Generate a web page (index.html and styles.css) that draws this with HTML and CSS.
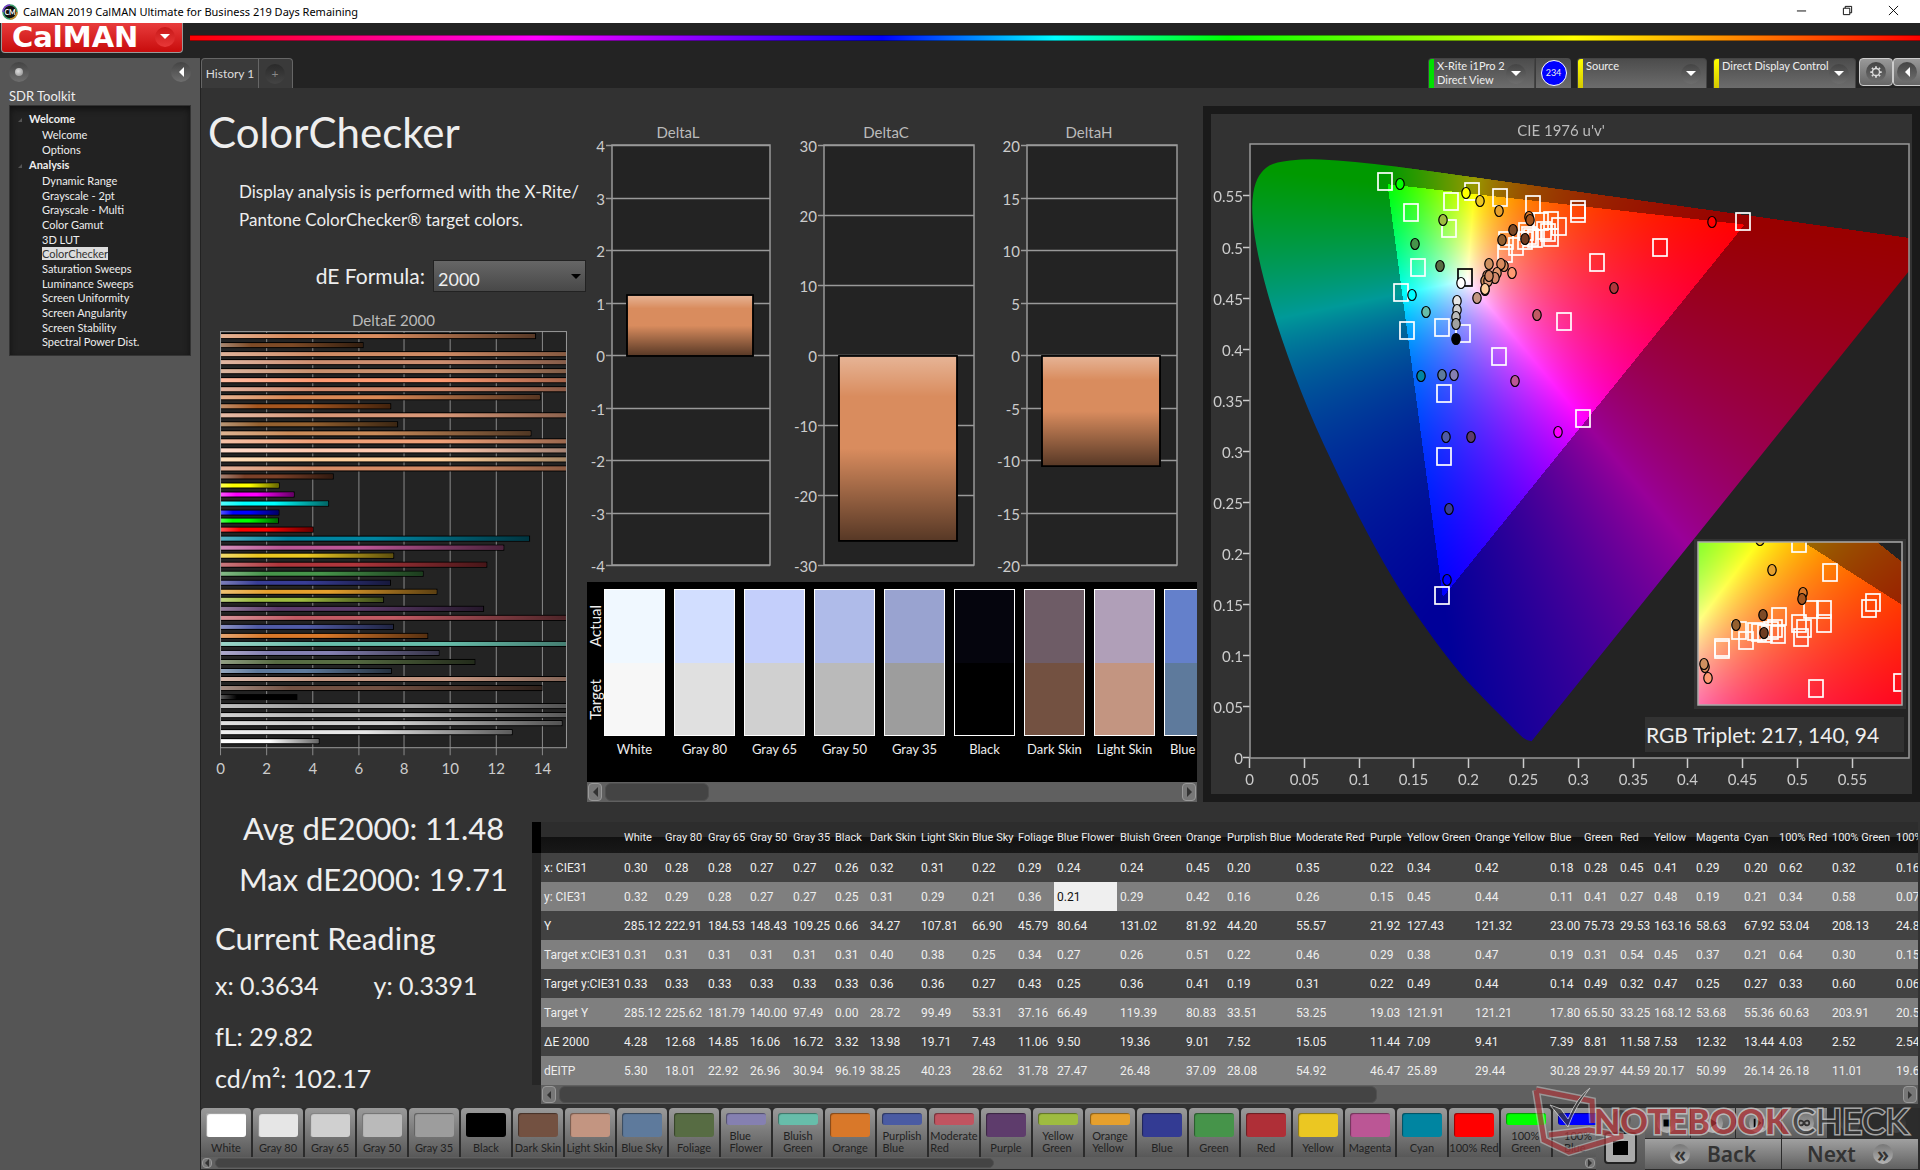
FILE: index.html
```html
<!DOCTYPE html>
<html lang="en">
<head>
    <meta charset="utf-8">
    <title>CalMAN 2019 CalMAN Ultimate for Business</title>
    <link rel="stylesheet" href="styles.css">
</head>
<body>
    <div class="titlebar">
        <svg class="app-icon" viewBox="0 0 16 16"><circle cx="8" cy="8" r="7" fill="#111" stroke="#3a9a6a" stroke-width="1.5"/><path d="M1 8a7 7 0 0 1 7-7" fill="none" stroke="#7a3acb" stroke-width="1.5"/><path d="M8 15a7 7 0 0 0 7-7" fill="none" stroke="#c98a2a" stroke-width="1.5"/><text x="8" y="11" text-anchor="middle" font-size="7" font-weight="700" fill="#fff">CM</text></svg>
        <span class="titlebar-text">CalMAN 2019 CalMAN Ultimate for Business 219 Days Remaining</span>
        <div class="window-buttons">
            <button aria-label="Minimize"><svg viewBox="0 0 12 12"><path d="M1 6.5h10"/></svg></button>
            <button aria-label="Restore"><svg viewBox="0 0 12 12"><path d="M1.500 3.500h7v7h-7zM3.500 3.500v-2h7v7h-2"/></svg></button>
            <button aria-label="Close"><svg viewBox="0 0 12 12"><path d="M1 1l10 10M11 1L1 11"/></svg></button>
        </div>
    </div>

    <header class="header">
        <button class="logo">CalMAN<span class="round red"><i class="arrow down"></i></span></button>
        <div class="rainbow"></div>
    </header>

    <div class="layout">
        <aside class="sidebar">
            <div class="sidebar-top">
                <button class="round" aria-label="Pin"><i class="dot"></i></button>
                <button class="round" aria-label="Collapse"><i class="arrow left"></i></button>
            </div>
            <div class="sidebar-title">SDR Toolkit</div>
            <nav class="tree">
                <div class="tree-group">Welcome</div>
                <ul>
                    <li><a href="#">Welcome</a></li>
                    <li><a href="#">Options</a></li>
                </ul>
                <div class="tree-group">Analysis</div>
                <ul class="analysis">
                    <li><a href="#">Dynamic Range</a></li>
                    <li><a href="#">Grayscale - 2pt</a></li>
                    <li><a href="#">Grayscale - Multi</a></li>
                    <li><a href="#">Color Gamut</a></li>
                    <li><a href="#">3D LUT</a></li>
                    <li><a href="#" class="active">ColorChecker</a></li>
                    <li><a href="#">Saturation Sweeps</a></li>
                    <li><a href="#">Luminance Sweeps</a></li>
                    <li><a href="#">Screen Uniformity</a></li>
                    <li><a href="#">Screen Angularity</a></li>
                    <li><a href="#">Screen Stability</a></li>
                    <li><a href="#">Spectral Power Dist.</a></li>
                </ul>
            </nav>
        </aside>

        <main class="main">
            <div class="tabs">
                <button class="tab">History 1</button>
                <button class="tab tab-add" aria-label="Add tab"><span class="round dark">+</span></button>
                <div class="devices">
                    <button class="device meter"><i class="led green"></i><span class="device-name">X-Rite i1Pro 2<br>Direct View</span><span class="round"><i class="arrow down"></i></span></button>
                    <button class="meter-count"><span>234</span></button>
                    <button class="device source"><i class="led yellow"></i><span class="device-name">Source</span><span class="round"><i class="arrow down"></i></span></button>
                    <button class="device display"><i class="led yellow"></i><span class="device-name">Direct Display Control</span><span class="round"><i class="arrow down"></i></span></button>
                    <button class="tool" aria-label="Settings"><span class="round"><svg viewBox="0 0 16 16"><circle cx="8" cy="8" r="4" fill="none" stroke="#ddd" stroke-width="1.5"/><path d="M8 1.500v2M8 12.500v2M1.500 8h2M12.500 8h2M3.400 3.400l1.400 1.400M11.200 11.200l1.400 1.400M3.400 12.600l1.400-1.400M11.200 4.800l1.400-1.400" stroke="#ddd" stroke-width="2"/></svg></span></button>
                    <button class="tool" aria-label="Hide"><span class="round"><i class="arrow left"></i></span></button>
                </div>
            </div>

            <div class="workspace">
                <section class="summary">
                    <h1>ColorChecker</h1>
                    <p>Display analysis is performed with the X-Rite/<br>Pantone ColorChecker® target colors.</p>
                    <div class="formula">
                        <label for="formula">dE Formula:</label>
                        <select id="formula"><option>2000</option><option>1976</option></select>
                        <i class="arrow down"></i>
                    </div>
                    <svg id="deltaE" class="chart" viewBox="0 0 360 472"></svg>
                </section>

                <section class="center">
                    <svg id="deltas" class="chart" viewBox="0 0 594 456"></svg>
                    <div class="compare">
                        <div class="compare-body">
                            <div class="compare-side"><span>Actual</span><span>Target</span></div>
                            <div id="patches" class="patches"></div>
                        </div>
                        <div class="scroll"><button aria-label="Left"><i class="arrow left"></i></button><div class="track"><div class="thumb short"></div></div><button aria-label="Right"><i class="arrow right"></i></button></div>
                    </div>
                </section>

                <section class="cie">
                    <div class="cie-stack">
                        <canvas id="gamut" width="701" height="680"></canvas>
                        <svg id="cie" viewBox="0 0 701 680"></svg>
                    </div>
                </section>
            </div>

            <div class="lower">
                <section class="readings">
                    <div class="big">Avg dE2000: 11.48</div>
                    <div class="big">Max dE2000: 19.71</div>
                    <h2>Current Reading</h2>
                    <div class="pair"><span>x: 0.3634</span><span>y: 0.3391</span></div>
                    <div class="reading">fL: 29.82</div>
                    <div class="reading last">cd/m²: 102.17</div>
                </section>
                <section class="grid-wrap">
                    <div class="grid-view"><table id="grid"></table></div>
                    <div class="scroll grid-scroll"><button aria-label="Left"><i class="arrow left"></i></button><div class="track"><div class="thumb long"></div></div><button aria-label="Right"><i class="arrow right"></i></button></div>
                </section>
            </div>

            <footer class="footer">
                <div class="strip">
                    <div id="buttons" class="buttons"></div>
                    <div class="scroll strip-scroll"><button aria-label="Left"><i class="arrow left"></i></button><div class="track"><div class="thumb half"></div></div><button aria-label="Right"><i class="arrow right"></i></button></div>
                </div>
                <div class="stop-area">
                    <button class="up" aria-label="Up"><span class="round"><i class="arrow up"></i></span></button>
                    <button class="pattern" aria-label="Pattern"><i></i></button>
                </div>
                <div class="controls">
                    <div class="transport">
                        <button aria-label="Stop"><span class="round light"><svg viewBox="0 0 16 16"><path d="M4 4h8v8H4z"/></svg></span></button>
                        <button aria-label="Read"><span class="round light"><svg viewBox="0 0 16 16"><path d="M5 3l8 5-8 5z"/></svg></span></button>
                        <button aria-label="Read series"><span class="round light"><svg viewBox="0 0 16 16"><path d="M2 3h2v10H2zM12 3h2v10h-2zM6 4l5 4-5 4z"/></svg></span></button>
                        <button aria-label="Continuous"><span class="round light"><svg viewBox="0 0 16 16"><path d="M8 8C6 4 2 5 2 8s4 4 6 0 6-3 6 0-4 4-6 0z" fill="none" stroke="#333" stroke-width="2"/></svg></span></button>
                        <button class="off" aria-label="Refresh"><span class="round dark"></span></button>
                        <button class="off" aria-label="Record"><span class="round dark"></span></button>
                    </div>
                    <div class="paging">
                        <button><span class="round light">«</span>Back</button>
                        <button>Next<span class="round light">»</span></button>
                    </div>
                </div>
            </footer>
        </main>
    </div>

    <svg class="watermark" viewBox="0 0 384 74">
        <g fill="none" stroke-linejoin="miter">
            <path d="M4 5L60 16L61 38M4 5L12 55L37 67L91 51L57 45L17 50" stroke="#ddd" stroke-width="8" opacity=".6"/>
            <path d="M4 5L60 16L61 38M4 5L12 55L37 67L91 51L57 45L17 50" stroke="#a63c40" stroke-width="5"/>
        </g>
        <path d="M18 20l11 4 7 10Q45 12 58 3Q44 20 36 42z" fill="#3a3a3a" stroke="#ddd"/>
        <text x="62" y="49" class="wm-note">NOTEBOOK</text>
        <text x="260" y="49" class="wm-check">CHECK</text>
    </svg>

    <script src="app.js"></script>
</body>
</html>
```

FILE: styles.css
```css
* {
    box-sizing: border-box;
}
body {
    margin: 0;
    min-height: 100vh;
    display: flex;
    flex-direction: column;
    background: #232323;
    color: #eee;
    font-family: Lato, "Open Sans", sans-serif;
    font-size: 13px;
    overflow: hidden;
}
button, select {
    font: inherit;
    color: inherit;
    border: 0;
    padding: 0;
    margin: 0;
    background: none;
}
a {
    color: inherit;
    text-decoration: none;
}
h1, h2, p, ul {
    margin: 0;
    padding: 0;
    font-weight: 400;
    list-style: none;
}

/* window chrome */
.titlebar {
    display: flex;
    align-items: center;
    height: 23px;
    background: #fff;
    color: #000;
    font-family: "Noto Sans", sans-serif;
    font-size: 11px;
    padding-left: 2px;
}
.app-icon {
    width: 16px;
    height: 16px;
    margin-right: 5px;
}
.window-buttons {
    margin-left: auto;
    display: flex;
}
.window-buttons button {
    width: 46px;
    height: 20px;
}
.window-buttons button:last-child {
    width: 50px;
    padding-right: 4px;
}
.window-buttons svg {
    width: 11px;
    height: 11px;
    fill: none;
    stroke: #000;
}
.header {
    display: flex;
    align-items: flex-start;
    height: 35px;
    gap: 7px;
    padding-left: 1px;
}
.logo {
    display: flex;
    align-items: center;
    justify-content: space-between;
    width: 182px;
    height: 30px;
    padding: 0 7px 2px 10px;
    border: 1px solid #999;
    border-top: 0;
    border-radius: 0 0 4px 4px;
    background: linear-gradient(#e83c3c, #c80c0c);
    color: #fff;
    font-family: "DejaVu Sans", sans-serif;
    font-size: 29px;
    line-height: 28px;
    font-weight: 700;
}
.rainbow {
    flex: 1;
    height: 6px;
    margin-top: 12px;
    background: linear-gradient(90deg, #f00, #f0f 20%, #00f 40%, #0ff 50%, #0f0 60%, #ff0 80%, #f00);
    border-top: 1px solid rgba(0, 0, 0, .4);
    border-bottom: 1px solid rgba(0, 0, 0, .4);
}
.round {
    display: flex;
    flex: none;
    align-items: center;
    justify-content: center;
    width: 20px;
    height: 20px;
    border-radius: 50%;
    background: linear-gradient(#444, #6e6e6e);
}
.round svg {
    width: 14px;
    height: 14px;
}
.round.red {
    background: linear-gradient(#c81818, #e83838);
}
.round.dark {
    background: linear-gradient(#2a2a2a, #444);
    color: #888;
}
.round.light {
    background: linear-gradient(#777, #b4b4b4);
}
.arrow {
    width: 0;
    height: 0;
    border: 5px solid transparent;
}
.arrow.down {
    border-top-color: #fff;
    border-bottom-width: 0;
}
.arrow.up {
    border-bottom-color: #333;
    border-top-width: 0;
}
.arrow.left {
    border-right-color: #fff;
    border-left-width: 0;
}
.arrow.right {
    border-left-color: #333;
    border-right-width: 0;
}
.dot {
    width: 8px;
    height: 8px;
    border-radius: 50%;
    background: radial-gradient(circle at 40% 40%, #ddd, #888);
}
.layout {
    display: flex;
    flex: 1;
}

/* sidebar */
.sidebar {
    flex: none;
    width: 200px;
    padding: 4px 9px;
    background: #555;
}
.sidebar-top {
    display: flex;
    justify-content: space-between;
}
.sidebar-title {
    font-size: 13px;
    line-height: 22px;
    margin-top: 3px;
    margin-bottom: -2px;
}
.tree {
    height: 251px;
    padding-top: 5px;
    background: #222;
    border: 1px solid #333;
    box-shadow: inset 0 3px 6px #111;
    font-size: 11px;
    line-height: 15px;
}
.tree-group {
    line-height: 16px;
    padding-left: 19px;
    font-weight: 700;
    position: relative;
}
.tree-group::before {
    content: "";
    position: absolute;
    left: 8px;
    top: 7px;
    border: 2px solid;
    border-color: transparent #555 #555 transparent;
}
.tree li {
    padding-left: 32px;
}
.analysis {
    display: flex;
    flex-direction: column;
    height: 176px;
}
.analysis li {
    flex: 1;
    min-height: 0;
}
.tree a.active {
    background: #ddd;
    color: #333;
}

/* tabs */
.main {
    flex: 1;
    min-width: 0;
    display: flex;
    flex-direction: column;
    background: #323232;
    border-left: 1px solid #222;
}
.tabs {
    display: flex;
    align-items: flex-end;
    height: 30px;
    background: #232323;
}
.tab {
    width: 58px;
    height: 30px;
    border: 1px solid #666;
    border-bottom: 0;
    border-radius: 4px 0 0 0;
    background: #3a3a3a;
    color: #ddd;
    font-size: 12px;
    white-space: nowrap;
}
.tab-add {
    width: 34px;
    border-left: 0;
    border-radius: 0 4px 0 0;
    padding-left: 6px;
}
.devices {
    display: flex;
    align-items: flex-end;
    margin-left: auto;
}
.device {
    display: flex;
    align-items: center;
    height: 30px;
    overflow: hidden;
    padding-right: 8px;
    border: 1px solid #444;
    border-bottom: 0;
    border-radius: 4px 4px 0 0;
    background: linear-gradient(#4c4c4c, #6c6c6c);
    font-size: 11px;
    line-height: 14px;
    text-align: left;
    white-space: nowrap;
}
.device.meter {
    width: 107px;
    border-radius: 4px 0 0 0;
}
.device.source {
    width: 130px;
    margin: 0 6px;
    padding-right: 5px;
}
.device.display {
    width: 143px;
    margin-right: 3px;
}
.led {
    align-self: stretch;
    flex: none;
    width: 5px;
    margin-right: 3px;
}
.led.green {
    background: #00e000;
}
.led.yellow {
    background: linear-gradient(#ff0, #d4c800);
}
.device-name {
    flex: 1;
    align-self: flex-start;
}
.meter-count {
    width: 36px;
    height: 30px;
    border-left: 1px solid #3a3a3a;
    border-radius: 0 4px 0 0;
    background: linear-gradient(#4c4c4c, #6c6c6c);
}
.meter-count span {
    display: block;
    width: 26px;
    height: 26px;
    margin: 0 auto;
    border: 1px solid #fff;
    border-radius: 50%;
    background: #00f;
    font-size: 9px;
    line-height: 24px;
}
.tool {
    display: flex;
    align-items: center;
    justify-content: center;
    align-self: flex-start;
    width: 34px;
    height: 28px;
    border: 1px solid #ccc;
    border-radius: 4px;
    background: linear-gradient(#999, #666);
}
.tool:last-child {
    width: 27px;
    border-right: 0;
    border-radius: 4px 0 0 4px;
}

/* charts */
.workspace {
    display: grid;
    grid-template-columns: minmax(0, 386fr) minmax(0, 616fr) minmax(0, 717fr);
    align-items: start;
}
.chart {
    display: block;
    width: 100%;
}
.summary {
    padding: 14px 13px 0 12px;
}
.summary h1 {
    margin-left: -5px;
    font-size: 42px;
    line-height: 60px;
}
.summary p {
    margin: 16px 0 26px 26px;
    font-size: 17px;
    line-height: 28px;
    white-space: nowrap;
}
.formula {
    position: relative;
    display: flex;
    align-items: center;
    justify-content: flex-end;
    gap: 8px;
    margin: 0 -12px 16px 0;
    font-size: 21px;
    line-height: 32px;
}
.formula select {
    appearance: none;
    width: 153px;
    height: 32px;
    padding: 2px 0 0 4px;
    border: 1px solid #222;
    background: linear-gradient(#666, #484848);
    font-size: 18px;
}
.formula .arrow {
    position: absolute;
    right: 5px;
    border-top-color: #000;
    pointer-events: none;
}
.center {
    padding: 32px 6px 0 0;
}
.center .chart {
    width: calc(100% - 16px);
    margin-left: 3px;
}
.compare {
    margin-top: 6px;
    background: #000;
}
.compare-body {
    display: flex;
    height: 200px;
    padding-top: 7px;
    overflow: hidden;
}
.compare-side {
    flex: none;
    display: flex;
    flex-direction: column;
    justify-content: space-around;
    width: 17px;
    height: 147px;
}
.compare-side span {
    writing-mode: vertical-rl;
    transform: rotate(180deg);
    line-height: 17px;
    font-size: 15px;
}
.patches {
    display: flex;
    gap: 9px;
    overflow: hidden;
}
.patch {
    flex: none;
    width: 61px;
    text-align: center;
    white-space: nowrap;
    font-size: 13px;
    line-height: 26px;
}
.patch-color {
    height: 147px;
    border: 1px solid #fff;
}
.patch-color i {
    display: block;
    height: 50%;
}
.scroll {
    display: flex;
    align-items: center;
    gap: 2px;
    height: 20px;
    background: #606060;
    padding: 1px;
}
.scroll button {
    display: flex;
    align-items: center;
    justify-content: center;
    width: 14px;
    height: 100%;
    border: 1px solid #999;
    border-radius: 4px;
    background: #777;
}
.scroll .arrow.left {
    border-right-color: #333;
}
.track {
    flex: 1;
    height: 100%;
    padding: 0 1px;
}
.thumb {
    height: 100%;
    border-radius: 6px;
    border: 1px solid #505050;
    background: #444;
}
.thumb.short {
    width: 104px;
}
.thumb.long {
    width: 61%;
}
.thumb.half {
    width: 57%;
}
.cie {
    margin-top: 18px;
    padding: 8px;
    background: #1a1a1a;
}
.cie-stack {
    display: grid;
    background: #323232;
}
.cie-stack > * {
    grid-area: 1 / 1;
    width: 100%;
    display: block;
}
svg text {
    font-family: Lato, sans-serif;
}
.axis {
    font-size: 15px;
    fill: #ccc;
}
.axis-title {
    font-size: 15px;
    fill: #bbb;
}
.triplet {
    font-size: 21px;
    fill: #eee;
}

/* readings and data grid */
.lower {
    display: flex;
    flex: 1;
    padding-right: 2px;
}
.readings {
    flex: none;
    width: 331px;
    padding: 1px 0 0 14px;
    white-space: nowrap;
}
.readings .big {
    margin-left: 28px;
    font-size: 31px;
    line-height: 51px;
}
.readings .big + .big {
    margin-left: 24px;
}
.readings h2 {
    font-size: 31px;
    line-height: 40px;
    margin: 13px 0 6px;
}
.pair {
    display: flex;
}
.pair span {
    width: 161px;
}
.pair, .reading {
    font-size: 25px;
    line-height: 42px;
}
.reading {
    margin-top: 9px;
}
.reading.last {
    margin-top: 0;
}
.grid-wrap {
    flex: 1;
    min-width: 0;
    padding-top: 20px;
}
.grid-view {
    overflow: hidden;
}
#grid {
    table-layout: fixed;
    width: 1401px;
    border-collapse: collapse;
    font-family: Roboto, sans-serif;
    font-size: 12px;
    line-height: 16px;
    white-space: nowrap;
}
#grid th, #grid td {
    height: 29px;
    padding: 0 0 0 3px;
    font-weight: 400;
    text-align: left;
}
#grid thead th {
    height: 31px;
    font-size: 11px;
    background: linear-gradient(#2d2d2d 50%, #111 50%, #181818);
}
#grid tbody tr {
    background: #424242;
}
#grid tbody tr:nth-child(even) {
    background: #7f7f7f;
}
#grid .mark {
    background: #262626;
}
#grid thead .mark {
    background: #000;
}
#grid td.selected {
    background: #efefef;
    color: #111;
}
.grid-scroll {
    margin-left: 9px;
    height: 19px;
}

/* footer */
.footer {
    display: flex;
    height: 62px;
    background: #2b2b2b;
    padding-right: 2px;
}
.strip {
    flex: 1;
    min-width: 0;
}
.buttons {
    display: flex;
    gap: 2px;
    height: 49px;
    overflow: hidden;
}
.color-button {
    flex: none;
    display: flex;
    flex-direction: column;
    align-items: center;
    justify-content: space-between;
    width: 50px;
    height: 49px;
    padding: 5px 0 3px;
    border-radius: 4px 4px 0 0;
    background: linear-gradient(#9a9a9a, #585858);
    color: #222;
    font-size: 11px;
    line-height: 12px;
    text-align: left;
    white-space: nowrap;
}
.color-button i {
    width: 40px;
    height: 24px;
    border-radius: 3px;
    box-shadow: inset 1px 1px 1px rgba(0, 0, 0, .4);
}
.color-button.two i {
    height: 12px;
}
.strip-scroll {
    height: 12px;
}
.strip-scroll button {
    width: 10px;
}
.strip-scroll .arrow, .grid-scroll .arrow {
    border-width: 4px;
}
.strip-scroll .arrow.left, .grid-scroll .arrow.left {
    border-left-width: 0;
}
.strip-scroll .arrow.right, .grid-scroll .arrow.right {
    border-right-width: 0;
}
.stop-area {
    display: flex;
    flex-direction: column;
    align-items: center;
    width: 49px;
    background: linear-gradient(#777, #555);
}
.up {
    height: 24px;
}
.pattern {
    width: 33px;
    height: 32px;
    border: 2px solid #222;
    border-radius: 4px;
    background: #aaa;
    padding: 7px;
}
.pattern i {
    display: block;
    height: 14px;
    background: #000;
}
.controls {
    flex: none;
    width: 273px;
    display: grid;
    grid-template-rows: 30px 30px;
    gap: 1px;
}
.transport {
    display: grid;
    grid-template-columns: repeat(6, 1fr);
    gap: 1px;
}
.transport button {
    display: flex;
    align-items: center;
    justify-content: center;
    background: linear-gradient(#888, #5c5c5c);
}
.transport .off {
    background: #2c2c2c;
}
.paging {
    display: grid;
    grid-template-columns: 1fr 1fr;
    gap: 1px;
}
.paging button {
    display: flex;
    align-items: center;
    justify-content: center;
    gap: 17px;
    background: linear-gradient(#a0a0a0, #606060);
    color: #333;
    font-family: "Noto Sans", sans-serif;
    font-size: 21px;
    line-height: 28px;
    font-weight: 600;
}
.paging .round {
    line-height: 18px;
}
.watermark {
    position: absolute;
    right: 3px;
    bottom: 11px;
    width: 386px;
    height: 74px;
    opacity: .75;
    pointer-events: none;
}
.wm-note, .wm-check {
    font-size: 34px;
    font-weight: 900;
    paint-order: stroke;
    stroke: #ccc;
    stroke-width: 3px;
    fill: #b03438;
}
.wm-check {
    font-size: 35px;
    font-weight: 400;
    fill: #333;
}
```

FILE: app.js
```js
const NS = 'http://www.w3.org/2000/svg';

function add(parent, tag, attrs, text) {
    const el = document.createElementNS(NS, tag);
    for (const key in attrs) el.setAttribute(key, attrs[key]);
    if (text !== undefined) el.textContent = text;
    parent.appendChild(el);
    return el;
}

function gloss(svg, id, vertical) {
    const g = add(add(svg, 'defs', {}), 'linearGradient', vertical ? { id: id, x2: 0, y2: 1 } : { id: id });
    add(g, 'stop', { offset: 0, 'stop-color': '#fff', 'stop-opacity': .35 });
    add(g, 'stop', { offset: .22, 'stop-color': '#fff', 'stop-opacity': 0 });
    add(g, 'stop', { offset: .5, 'stop-color': '#000', 'stop-opacity': 0 });
    add(g, 'stop', { offset: 1, 'stop-color': '#000', 'stop-opacity': .6 });
}

// DeltaE 2000, one bar per patch, top to bottom
const bars = [
    ['#d98c5e', 13.7], ['#7d4a26', 6.2], ['#ce8a64', 19], ['#cd8e70', 19], ['#c8906e', 19], ['#ff9a72', 19],
    ['#d38a6c', 19], ['#d98855', 13.9], ['#a5561f', 7.4], ['#d99878', 19], ['#94602f', 7.7], ['#cb8c5a', 13.5],
    ['#f0a078', 19], ['#ffc9b0', 19], ['#ffcf9c', 19], ['#d68c66', 19], ['#7a4028', 4.9], ['#ffff00', 2.55],
    ['#ff00ff', 3.2], ['#00ffff', 4.7], ['#0000ff', 2.54], ['#00ff00', 2.52], ['#ff0000', 4.03], ['#0085a1', 13.44],
    ['#bb5695', 12.32], ['#ebc722', 7.53], ['#af363c', 11.58], ['#46944a', 8.81], ['#383d96', 7.39], ['#e6a02d', 9.41],
    ['#9ebc40', 7.09], ['#5e3c6c', 11.44], ['#c15a63', 15.05], ['#505ba6', 7.52], ['#d97829', 9.01], ['#67bdaa', 19.36],
    ['#8580b1', 9.5], ['#576c43', 11.06], ['#5e7a9c', 7.43], ['#c39682', 19.71], ['#735244', 13.98], ['#000000', 3.32],
    ['#a0a0a0', 16.72], ['#bababa', 16.06], ['#d0d0d0', 14.85], ['#e6e6e6', 12.68], ['#ffffff', 4.28]
];

function drawDeltaE() {
    const svg = document.getElementById('deltaE');
    gloss(svg, 'glossH', false);
    const clip = add(svg.querySelector('defs'), 'clipPath', { id: 'clipE' });
    add(clip, 'rect', { x: 7, y: 23, width: 346, height: 416 });
    add(svg, 'text', { x: 180, y: 18, 'text-anchor': 'middle', class: 'axis-title' }, 'DeltaE 2000');
    add(svg, 'rect', { x: 7, y: 23, width: 346, height: 415, fill: '#232323' });
    for (let v = 0; v <= 14; v += 2) {
        const x = Math.round(7 + v * 22.93) + .5;
        add(svg, 'path', { d: `M${x} 23V446`, stroke: '#8a8a8a' });
        add(svg, 'text', { x: x, y: 465, 'text-anchor': 'middle', class: 'axis' }, v);
    }
    const g = add(svg, 'g', { 'clip-path': 'url(#clipE)' });
    bars.forEach((bar, i) => {
        const y = Math.round(26 + i * 8.78);
        add(g, 'rect', { x: 7, y: y - 1, width: bar[1] * 22.93 + 1, height: 6, fill: '#000' });
        add(g, 'rect', { x: 7, y: y, width: bar[1] * 22.93, height: 4, fill: bar[0] });
        add(g, 'rect', { x: 7, y: y, width: bar[1] * 22.93, height: 4, fill: 'url(#glossH)' });
    });
    add(svg, 'rect', { x: 7.5, y: 23.5, width: 345, height: 415, fill: 'none', stroke: '#999' });
}

function drawDelta(svg, title, x, w, max, step, value) {
    add(svg, 'text', { x: x + w / 2 - 13, y: 18, 'text-anchor': 'middle', class: 'axis-title' }, title);
    add(svg, 'rect', { x: x, y: 25, width: w, height: 420, fill: '#232323' });
    for (let v = max; v >= -max; v -= step) {
        const y = Math.round(235 - v / max * 210) + .5;
        add(svg, 'path', { d: `M${x - 6} ${y}H${x + w}`, stroke: '#999', 'stroke-width': 1.5 });
        add(svg, 'text', { x: x - 7, y: y + 6, 'text-anchor': 'end', class: 'axis' }, v);
    }
    add(svg, 'rect', { x: x, y: 25, width: w, height: 420, fill: 'none', stroke: '#999', 'stroke-width': 1.5 });
    const h = Math.abs(value) / max * 210;
    const box = { x: x + 15, y: value > 0 ? 236 - h : 236, width: w - 32, height: h, stroke: '#000', 'stroke-width': 1.5 };
    add(svg, 'rect', { ...box, fill: '#d98c5e' });
    add(svg, 'rect', { ...box, fill: 'url(#glossV)' });
}

function drawDeltas() {
    const svg = document.getElementById('deltas');
    gloss(svg, 'glossV', true);
    drawDelta(svg, 'DeltaL', 22, 158, 4, 1, 1.16);
    drawDelta(svg, 'DeltaC', 234, 150, 30, 10, -26.4);
    drawDelta(svg, 'DeltaH', 437, 150, 20, 5, -10.5);
}

// spectral locus in u'v'
const locus = [
    [.2569, .0165], [.2522, .0169], [.2461, .0226], [.2347, .0350], [.2161, .0549], [.1877, .0871], [.1441, .1510], [.1147, .2044],
    [.0828, .2708], [.0521, .3427], [.0282, .4117], [.0119, .4698], [.0035, .5131], [.0014, .5432],
    [.0046, .5638], [.0123, .5770], [.0231, .5837], [.0501, .5868], [.0792, .5856], [.1127, .5821],
    [.1531, .5766], [.2026, .5694], [.2623, .5604], [.3315, .5501], [.4035, .5393], [.4692, .5296],
    [.5203, .5219], [.6234, .5065]
];

// brightest color for a chromaticity, dimmed outside the RGB triangle
function shade(x, y) {
    const X = x / y, Z = (1 - x - y) / y;
    const lin = [
        3.2406 * X - 1.5372 - .4986 * Z,
        -.9689 * X + 1.8758 + .0415 * Z,
        .0557 * X - .2040 + 1.0570 * Z
    ];
    const dim = Math.min(...lin) < 0 ? .6 : 1;
    const top = Math.max(...lin);
    return lin.map(c => 255 * dim * Math.max(c, 0) / top);
}

function paint(w, h, toXY) {
    const c = document.createElement('canvas');
    c.width = w;
    c.height = h;
    const ctx = c.getContext('2d');
    const img = ctx.createImageData(w, h);
    for (let j = 0; j < h; j++) {
        for (let i = 0; i < w; i++) {
            const [x, y] = toXY(i, j);
            const rgb = x + y > 1 ? [35, 35, 35] : shade(x, y);
            img.data.set([...rgb, 255], (j * w + i) * 4);
        }
    }
    ctx.putImageData(img, 0, 0);
    return c;
}

function drawGamut() {
    const ctx = document.getElementById('gamut').getContext('2d');
    ctx.fillStyle = '#232323';
    ctx.fillRect(39, 30, 659, 614);
    const fill = paint(659, 614, (i, j) => {
        const u = i / 1096, v = (614 - j) / 1021;
        const d = 6 * u - 16 * v + 12;
        return [9 * u / d, Math.max(4 * v / d, .0001)];
    });
    ctx.save();
    ctx.beginPath();
    ctx.rect(39, 30, 659, 614);
    ctx.clip();
    ctx.beginPath();
    const pts = locus.map(p => [39 + p[0] * 1096, 644 - p[1] * 1021]);
    ctx.moveTo(...pts[0]);
    for (let i = 1; i < pts.length - 1; i++) {
        ctx.quadraticCurveTo(...pts[i], (pts[i][0] + pts[i + 1][0]) / 2, (pts[i][1] + pts[i + 1][1]) / 2);
    }
    ctx.lineTo(...pts[pts.length - 1]);
    ctx.closePath();
    ctx.clip();
    ctx.drawImage(fill, 39, 30);
    ctx.restore();
    // magnified corner in xy
    ctx.fillStyle = '#323232';
    ctx.fillRect(483, 425, 212, 170);
    ctx.drawImage(paint(204, 163, (i, j) => [.349 + i / 1060, .482 - j / 850]), 487, 428);
}

const targets = [
    [174, 67], [200, 98], [240, 87], [261, 77], [289, 83], [322, 90], [367, 95], [367, 99], [532, 107], [449, 133],
    [386, 148], [238, 114], [207, 153], [190, 178], [196, 216], [231, 213], [252, 219], [288, 242], [353, 207],
    [372, 304], [233, 279], [233, 342], [231, 481], [294, 139], [295, 126], [305, 132], [315, 117], [314, 126],
    [318, 121], [324, 124], [330, 107], [340, 106], [348, 112], [340, 123], [333, 116], [320, 123], [337, 118]
];
const actuals = [
    [189, 70, '#00ff00'], [255, 79, '#ffff00'], [269, 87, '#ebc722'], [288, 97, '#e6a02d'], [232, 106, '#9ebc40'],
    [204, 130, '#46944a'], [229, 152, '#576c43'], [318, 103, '#d97829'], [319, 106, '#a5561f'], [302, 116, '#7d4a26'],
    [291, 126, '#94602f'], [314, 125, '#6e3b20'], [278, 150, '#ce9060'], [293, 152, '#d98c5e'], [290, 150, '#d98c5e'],
    [301, 159, '#ff9a72'], [286, 159, '#e09a70'], [284, 164, '#d38a6c'], [276, 162, '#f0a078'], [274, 167, '#cb8c5a'],
    [277, 167, '#d99878'], [278, 162, '#ce8a64'], [274, 176, '#ffc9b0'], [274, 175, '#ffcf9c'], [266, 184, '#c39682'],
    [250, 169, '#ffffff'], [201, 181, '#00ffff'], [215, 198, '#67bdaa'], [246, 187, '#e6e6e6'], [246, 196, '#d0d0d0'],
    [245, 203, '#bababa'], [245, 210, '#a0a0a0'], [245, 225, '#000000'], [210, 262, '#0085a1'], [231, 261, '#5e7a9c'],
    [243, 261, '#8580b1'], [304, 267, '#bb5695'], [235, 323, '#505ba6'], [260, 323, '#5e3c6c'], [347, 318, '#ff00ff'],
    [403, 174, '#af363c'], [326, 201, '#c15a63'], [501, 108, '#ff0000'], [238, 395, '#383d96'], [236, 466, '#0000ff']
];
const insetTargets = [
    [588, 429], [619, 458], [600, 495], [613, 495], [613, 509], [593, 514], [590, 523], [588, 509], [662, 488], [658, 494],
    [568, 502], [528, 516], [535, 526], [511, 533], [511, 535], [544, 517], [548, 518], [564, 514], [567, 520], [554, 519],
    [560, 516], [605, 574], [690, 568]
];
const insetActuals = [
    [549, 426, '#ebc722'], [561, 456, '#e6a02d'], [592, 479, '#d97829'], [591, 485, '#a5561f'], [552, 501, '#7d4a26'],
    [525, 511, '#94602f'], [553, 519, '#6e3b20'], [494, 553, '#d98c5e'], [493, 550, '#ce9060'], [497, 564, '#ff9a72']
];

function square(g, p, color) {
    add(g, 'rect', { x: p[0] - 7, y: p[1] - 8, width: 14, height: 17, fill: 'none', stroke: color, 'stroke-width': 1.7 });
}

function dot(g, p) {
    add(g, 'ellipse', { cx: p[0], cy: p[1], rx: 4.2, ry: 5.5, fill: p[2], stroke: '#000', 'stroke-width': 1.2 });
}

function drawCie() {
    const svg = document.getElementById('cie');
    const clip = add(add(svg, 'defs', {}), 'clipPath', { id: 'clipInset' });
    add(clip, 'rect', { x: 487, y: 428, width: 204, height: 163 });
    add(svg, 'text', { x: 350, y: 22, 'text-anchor': 'middle', class: 'axis-title' }, "CIE 1976 u'v'");
    for (let i = 0; i < 12; i++) {
        const label = String(+(i * .05).toFixed(2));
        const x = Math.round(39 + i * 54.8) - .5, y = Math.round(644 - i * 51.05) - .5;
        add(svg, 'path', { d: `M${x} 644v10M39 ${y}h-7`, stroke: '#ccc', 'stroke-width': 1.5 });
        add(svg, 'text', { x: x, y: 671, 'text-anchor': 'middle', class: 'axis' }, label);
        add(svg, 'text', { x: 32, y: y + 6, 'text-anchor': 'end', class: 'axis' }, label);
    }
    add(svg, 'rect', { x: 39, y: 30, width: 659, height: 614, fill: 'none', stroke: '#999', 'stroke-width': 1.5 });
    targets.forEach(p => square(svg, p, '#fff'));
    square(svg, [254, 163], '#000');
    actuals.forEach(p => dot(svg, p));
    const inset = add(svg, 'g', { 'clip-path': 'url(#clipInset)' });
    insetTargets.forEach(p => square(inset, p, '#fff'));
    insetActuals.forEach(p => dot(inset, p));
    add(svg, 'rect', { x: 487, y: 428, width: 204, height: 163, fill: 'none', stroke: '#aaa', 'stroke-width': 1.5 });
    add(svg, 'rect', { x: 434, y: 603, width: 259, height: 35, fill: '#323232' });
    add(svg, 'text', { x: 435, y: 629, class: 'triplet' }, 'RGB Triplet: 217, 140, 94');
}

// name, actual, target
const patches = [
    ['White', '#f0f8ff', '#f7f7f7'], ['Gray 80', '#d2deff', '#e0e0e0'], ['Gray 65', '#c4cffb', '#d0d0d0'],
    ['Gray 50', '#afbbe9', '#bababa'], ['Gray 35', '#99a3d0', '#9d9d9d'], ['Black', '#05050d', '#000000'],
    ['Dark Skin', '#6e5c66', '#735141'], ['Light Skin', '#b09fb8', '#c39581'], ['Blue Sky', '#6480cb', '#5e7a9c']
];

const colors = [
    ['White', '#ffffff'], ['Gray 80', '#e6e6e6'], ['Gray 65', '#d0d0d0'], ['Gray 50', '#bababa'], ['Gray 35', '#9d9d9d'],
    ['Black', '#000000'], ['Dark Skin', '#735141'], ['Light Skin', '#c39581'], ['Blue Sky', '#5e7a9c'], ['Foliage', '#576c43'],
    ['Blue<br>Flower', '#8580b1'], ['Bluish<br>Green', '#67bdaa'], ['Orange', '#d97829'], ['Purplish<br>Blue', '#4a5ba3'],
    ['Moderate<br>Red', '#c15460'], ['Purple', '#5e3c6c'], ['Yellow<br>Green', '#9ebc40'], ['Orange<br>Yellow', '#e6a02d'],
    ['Blue', '#333b93'], ['Green', '#46944a'], ['Red', '#af2f37'], ['Yellow', '#ebc722'], ['Magenta', '#bb5695'],
    ['Cyan', '#0085a1'], ['100% Red', '#ff0000'], ['100%<br>Green', '#00ff00'], ['100%<br>Blue', '#0000ff']
];

const widths = [9, 80, 41, 43, 42, 43, 42, 35, 51, 51, 46, 39, 63, 66, 41, 69, 74, 37, 68, 75, 34, 36, 34, 42, 48, 35, 53, 64, 40];
const heads = ['', 'White', 'Gray 80', 'Gray 65', 'Gray 50', 'Gray 35', 'Black', 'Dark Skin', 'Light Skin', 'Blue Sky', 'Foliage',
    'Blue Flower', 'Bluish Green', 'Orange', 'Purplish Blue', 'Moderate Red', 'Purple', 'Yellow Green', 'Orange Yellow', 'Blue',
    'Green', 'Red', 'Yellow', 'Magenta', 'Cyan', '100% Red', '100% Green', '100% Blue'];
const rows = [
    'x: CIE31|0.30 0.28 0.28 0.27 0.27 0.26 0.32 0.31 0.22 0.29 0.24 0.24 0.45 0.20 0.35 0.22 0.34 0.42 0.18 0.28 0.45 0.41 0.29 0.20 0.62 0.32 0.16',
    'y: CIE31|0.32 0.29 0.28 0.27 0.27 0.25 0.31 0.29 0.21 0.36 0.21 0.29 0.42 0.16 0.26 0.15 0.45 0.44 0.11 0.41 0.27 0.48 0.19 0.21 0.34 0.58 0.07',
    'Y|285.12 222.91 184.53 148.43 109.25 0.66 34.27 107.81 66.90 45.79 80.64 131.02 81.92 44.20 55.57 21.92 127.43 121.32 23.00 75.73 29.53 163.16 58.63 67.92 53.04 208.13 24.8',
    'Target x:CIE31|0.31 0.31 0.31 0.31 0.31 0.31 0.40 0.38 0.25 0.34 0.27 0.26 0.51 0.22 0.46 0.29 0.38 0.47 0.19 0.31 0.54 0.45 0.37 0.21 0.64 0.30 0.15',
    'Target y:CIE31|0.33 0.33 0.33 0.33 0.33 0.33 0.36 0.36 0.27 0.43 0.25 0.36 0.41 0.19 0.31 0.22 0.49 0.44 0.14 0.49 0.32 0.47 0.25 0.27 0.33 0.60 0.06',
    'Target Y|285.12 225.62 181.79 140.00 97.49 0.00 28.72 99.49 53.31 37.16 66.49 119.39 80.83 33.51 53.25 19.03 121.91 121.21 17.80 65.50 33.25 168.12 53.68 55.36 60.63 203.91 20.5',
    'ΔE 2000|4.28 12.68 14.85 16.06 16.72 3.32 13.98 19.71 7.43 11.06 9.50 19.36 9.01 7.52 15.05 11.44 7.09 9.41 7.39 8.81 11.58 7.53 12.32 13.44 4.03 2.52 2.54',
    'dEITP|5.30 18.01 22.92 26.96 30.94 96.19 38.25 40.23 28.62 31.78 27.47 26.48 37.09 28.08 54.92 46.47 25.89 29.44 30.28 29.97 44.59 20.17 50.99 26.14 26.18 11.01 19.6'
];

function buildGrid() {
    const body = rows.map((row, r) => {
        const [name, values] = row.split('|');
        const cells = values.split(' ').map((v, c) => `<td${r === 1 && c === 10 ? ' class="selected"' : ''}>${v}</td>`);
        return `<tr><td class="mark"></td><th scope="row">${name}</th>${cells.join('')}</tr>`;
    });
    document.getElementById('grid').innerHTML =
        '<colgroup>' + widths.map(w => `<col style="width:${w}px">`).join('') + '</colgroup>' +
        '<thead><tr><th class="mark"></th>' + heads.map(h => `<th>${h}</th>`).join('') + '</tr></thead>' +
        '<tbody>' + body.join('') + '</tbody>';
}

document.getElementById('patches').innerHTML = patches.map(p =>
    `<div class="patch"><div class="patch-color"><i style="background:${p[1]}"></i><i style="background:${p[2]}"></i></div>${p[0]}</div>`).join('');
document.getElementById('buttons').innerHTML = colors.map(c =>
    `<button class="color-button${c[0].includes('<br>') ? ' two' : ''}"><i style="background:${c[1]}"></i><span>${c[0]}</span></button>`).join('');

drawDeltaE();
drawDeltas();
drawGamut();
drawCie();
buildGrid();
```
